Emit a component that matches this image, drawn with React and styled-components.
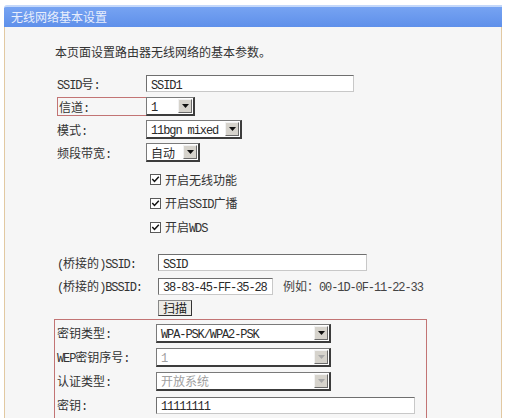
import React from 'react';
import styled, { createGlobalStyle } from 'styled-components';

const GlobalStyle = createGlobalStyle`
	html, body {
		margin: 0;
		padding: 0;
		background: #ffffff;
	}
	body {
		font-family: "Noto Sans CJK SC", "Liberation Sans", sans-serif;
		font-size: 12px;
		color: #333333;
	}
`;

const Panel = styled.div`
	margin: 5px 0 0 4px;
	width: 498px;
	height: 413px;
	display: flex;
	flex-direction: column;
	overflow: hidden;
`;

const TitleBar = styled.div`
	height: 20px;
	border-top: 2px solid #c4d8fa;
	border-top-left-radius: 3px;
	background: linear-gradient(#76a3f2, #5f90ea);
	color: #e8eefc;
	font-size: 12px;
	line-height: 19px;
	padding-left: 7px;
	flex: none;
`;

const Body = styled.div`
	flex: 1;
	background: #f6f6f6;
	border-left: 1px solid #e2c9a2;
	border-right: 1px solid #e2c9a2;
	padding: 16px 0 0 52px;
`;

const Intro = styled.div`
	height: 18px;
	line-height: 18px;
	margin-left: -2px;
	margin-bottom: 11px;
	color: #333;
`;

const Lat = styled.span`
	font-family: "Liberation Mono", monospace;
	font-size: 12px;
	letter-spacing: -1.1px;
	white-space: pre;
`;

const Mixed = ({ text }) =>
	text.split(/([\x20-\x7e]+)/).filter(Boolean).map((s, i) =>
		/[\x20-\x7e]/.test(s) ? <Lat key={i}>{s}</Lat> : <span key={i}>{s}</span>
	);

const Row = styled.div`
	display: flex;
	align-items: center;
	height: ${p => p.h || 23}px;
	margin-top: ${p => p.mt || 0}px;
`;

const Label = styled.div`
	width: ${p => p.w}px;
	flex: none;
	box-sizing: border-box;
	white-space: nowrap;
	color: #333;
`;

const MarkedLabel = styled(Label)`
	height: 19px;
	line-height: 17px;
	border: 1px solid #c27474;
	border-right: none;
	padding-left: 1px;
`;

const Field = styled.div`
	width: ${p => p.w}px;
	height: ${p => p.h || 17}px;
	box-sizing: border-box;
	flex: none;
	display: flex;
	align-items: center;
	justify-content: space-between;
	background: #ffffff;
	border: 1px solid;
	border-color: #6f6f6f #c8c8c8 #c8c8c8 #6f6f6f;
	padding-left: 4px;
	color: ${p => p.disabled ? '#a0a0a0' : '#2a2a2a'};
	white-space: nowrap;
	overflow: hidden;
`;

const SelectBox = styled(Field)`
	height: 19px;
	padding-right: 1px;
	border-color: #7a7a7a #3c3c3c #3c3c3c #7a7a7a;
	border-width: 1px 2px 2px 1px;
`;

const ArrowBtn = styled.div`
	width: 14px;
	height: 14px;
	flex: none;
	box-sizing: border-box;
	background: #d6d3cc;
	border: 1px solid;
	border-color: #f2f2f2 #6a6a6a #6a6a6a #f2f2f2;
	display: flex;
	align-items: center;
	justify-content: center;
`;

const Select = ({ w, value, disabled }) => (
	<SelectBox w={w} disabled={disabled}>
		<span><Mixed text={value} /></span>
		<ArrowBtn>
			<svg width="7" height="4" viewBox="0 0 7 4">
				<path d="M0 0 L7 0 L3.5 4 Z" fill={disabled ? '#a8a8a8' : '#111'} />
			</svg>
		</ArrowBtn>
	</SelectBox>
);

const CheckRow = styled(Row)`
	padding-left: 93px;
	gap: 4px;
	height: 24px;
`;

const Check = () => (
	<svg width="11" height="11" viewBox="0 0 11 11">
		<rect x="0.5" y="0.5" width="10" height="10" fill="#fff" stroke="#5a5a5a" />
		<path d="M2.3 5 L4.5 7.5 L8.8 2.8" fill="none" stroke="#111" strokeWidth="1.5" />
	</svg>
);

const Hint = styled.span`
	margin-left: 10px;
	color: #444;
	white-space: nowrap;
`;

const ScanButton = styled.div`
	margin-left: 101px;
	height: 16px;
	padding: 0 4px;
	box-sizing: border-box;
	display: flex;
	align-items: center;
	background: #ecebe6;
	border: 1px solid;
	border-color: #888 #333 #333 #888;
	color: #222;
	line-height: 14px;
`;

const SecurityBox = styled.div`
	margin: 1px 0 0 -3px;
	width: 373px;
	box-sizing: border-box;
	border: 1px solid #c27474;
	padding: 1px 0 0 2px;
`;

const SecRow = styled(Row)`
	height: 24px;
`;

const basic = [
	{ label: 'SSID号:', type: 'input', w: 208, value: 'SSID1' },
	{ label: '信道:', type: 'select', w: 49, value: '1', marked: true },
	{ label: '模式:', type: 'select', w: 96, value: '11bgn mixed' },
	{ label: '频段带宽:', type: 'select', w: 54, value: '自动' },
];

const checks = ['开启无线功能', '开启SSID广播', '开启WDS'];

const security = [
	{ label: '密钥类型:', type: 'select', w: 175, value: 'WPA-PSK/WPA2-PSK' },
	{ label: 'WEP密钥序号:', type: 'select', w: 175, value: '1', disabled: true },
	{ label: '认证类型:', type: 'select', w: 175, value: '开放系统', disabled: true },
	{ label: '密钥:', type: 'input', w: 259, value: '11111111' },
	{ label: '', type: 'input', w: 259, value: '' },
];

const Control = ({ item }) =>
	item.type === 'select'
		? <Select w={item.w} value={item.value} disabled={item.disabled} />
		: <Field w={item.w} disabled={item.disabled}><span><Mixed text={item.value} /></span></Field>;

export default function App() {
	return (
		<>
			<GlobalStyle />
			<Panel>
				<TitleBar>无线网络基本设置</TitleBar>
				<Body>
					<Intro>本页面设置路由器无线网络的基本参数。</Intro>

					{basic.map(item => (
						<Row key={item.label}>
							{item.marked
								? <MarkedLabel w={89}><Mixed text={item.label} /></MarkedLabel>
								: <Label w={89}><Mixed text={item.label} /></Label>}
							<Control item={item} />
						</Row>
					))}

					{checks.map((c, i) => (
						<CheckRow key={c} mt={i === 0 ? 3 : 0} h={i === 2 ? 24 : 23}>
							<Check />
							<span><Mixed text={c} /></span>
						</CheckRow>
					))}

					<Row mt={12}>
						<Label w={101}><Mixed text="(桥接的)SSID:" /></Label>
						<Field w={209}><span><Mixed text="SSID" /></span></Field>
					</Row>
					<Row h={24}>
						<Label w={101}><Mixed text="(桥接的)BSSID:" /></Label>
						<Field w={115}><span><Mixed text="38-83-45-FF-35-28" /></span></Field>
						<Hint><Mixed text="例如：00-1D-0F-11-22-33" /></Hint>
					</Row>
					<Row h={20}>
						<ScanButton>扫描</ScanButton>
					</Row>

					<SecurityBox>
						{security.map((item, i) => (
							<SecRow key={i}>
								<Label w={99}><Mixed text={item.label} /></Label>
								<Control item={item} />
							</SecRow>
						))}
					</SecurityBox>
				</Body>
			</Panel>
		</>
	);
}
